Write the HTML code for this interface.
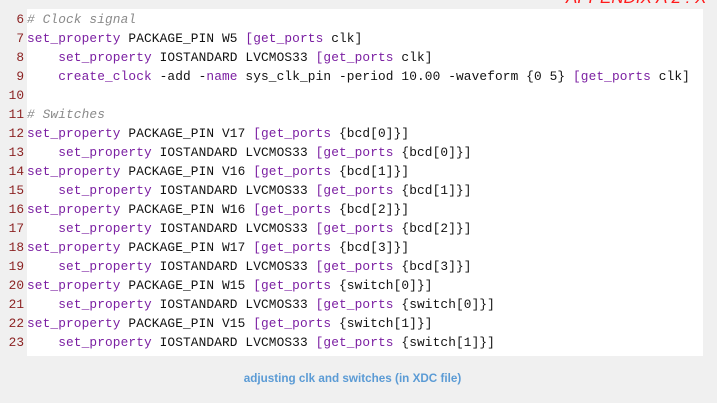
<!DOCTYPE html>
<html><head><meta charset="utf-8"><style>
body{margin:0;width:717px;height:403px;background:#f0f0f0;position:relative;overflow:hidden;font-family:"Liberation Mono",monospace;}
.panel{position:absolute;left:27px;top:9px;width:676px;height:347px;background:#fff;}
.ln{position:absolute;left:0;width:24px;text-align:right;font-size:12.8px;color:#8b2222;line-height:19px;}
.code{position:absolute;left:27px;font-size:12.8px;letter-spacing:0.12px;color:#111;line-height:19px;white-space:pre;}
.k{color:#7b1fa2}.c{color:#8a8a8a;font-style:italic}
.title{position:absolute;left:566px;top:-12px;color:#ff1a1a;font-family:"Liberation Sans",sans-serif;font-style:italic;font-size:17px;white-space:nowrap;}
.cap{position:absolute;left:0;width:705px;top:372px;text-align:center;color:#5b9bd5;font-family:"Liberation Sans",sans-serif;font-weight:bold;font-size:11.7px;}
</style></head><body>
<div class="title">APPENDIX A 2 : X</div>
<div class="panel"></div>
<div class="ln" style="top:10px">6</div><div class="code" style="top:10px"><span class="c"># Clock signal</span></div>
<div class="ln" style="top:29px">7</div><div class="code" style="top:29px"><span class="k">set_property</span> PACKAGE_PIN W5 <span class="k">[get_ports</span> clk]</div>
<div class="ln" style="top:48px">8</div><div class="code" style="top:48px">    <span class="k">set_property</span> IOSTANDARD LVCMOS33 <span class="k">[get_ports</span> clk]</div>
<div class="ln" style="top:67px">9</div><div class="code" style="top:67px">    <span class="k">create_clock</span> -add -<span class="k">name</span> sys_clk_pin -period 10.00 -waveform {0 5} <span class="k">[get_ports</span> clk]</div>
<div class="ln" style="top:86px">10</div>
<div class="ln" style="top:105px">11</div><div class="code" style="top:105px"><span class="c"># Switches</span></div>
<div class="ln" style="top:124px">12</div><div class="code" style="top:124px"><span class="k">set_property</span> PACKAGE_PIN V17 <span class="k">[get_ports</span> {bcd[0]}]</div>
<div class="ln" style="top:143px">13</div><div class="code" style="top:143px">    <span class="k">set_property</span> IOSTANDARD LVCMOS33 <span class="k">[get_ports</span> {bcd[0]}]</div>
<div class="ln" style="top:162px">14</div><div class="code" style="top:162px"><span class="k">set_property</span> PACKAGE_PIN V16 <span class="k">[get_ports</span> {bcd[1]}]</div>
<div class="ln" style="top:181px">15</div><div class="code" style="top:181px">    <span class="k">set_property</span> IOSTANDARD LVCMOS33 <span class="k">[get_ports</span> {bcd[1]}]</div>
<div class="ln" style="top:200px">16</div><div class="code" style="top:200px"><span class="k">set_property</span> PACKAGE_PIN W16 <span class="k">[get_ports</span> {bcd[2]}]</div>
<div class="ln" style="top:219px">17</div><div class="code" style="top:219px">    <span class="k">set_property</span> IOSTANDARD LVCMOS33 <span class="k">[get_ports</span> {bcd[2]}]</div>
<div class="ln" style="top:238px">18</div><div class="code" style="top:238px"><span class="k">set_property</span> PACKAGE_PIN W17 <span class="k">[get_ports</span> {bcd[3]}]</div>
<div class="ln" style="top:257px">19</div><div class="code" style="top:257px">    <span class="k">set_property</span> IOSTANDARD LVCMOS33 <span class="k">[get_ports</span> {bcd[3]}]</div>
<div class="ln" style="top:276px">20</div><div class="code" style="top:276px"><span class="k">set_property</span> PACKAGE_PIN W15 <span class="k">[get_ports</span> {switch[0]}]</div>
<div class="ln" style="top:295px">21</div><div class="code" style="top:295px">    <span class="k">set_property</span> IOSTANDARD LVCMOS33 <span class="k">[get_ports</span> {switch[0]}]</div>
<div class="ln" style="top:314px">22</div><div class="code" style="top:314px"><span class="k">set_property</span> PACKAGE_PIN V15 <span class="k">[get_ports</span> {switch[1]}]</div>
<div class="ln" style="top:333px">23</div><div class="code" style="top:333px">    <span class="k">set_property</span> IOSTANDARD LVCMOS33 <span class="k">[get_ports</span> {switch[1]}]</div>
<div class="cap">adjusting clk and switches (in XDC file)</div>
</body></html>
